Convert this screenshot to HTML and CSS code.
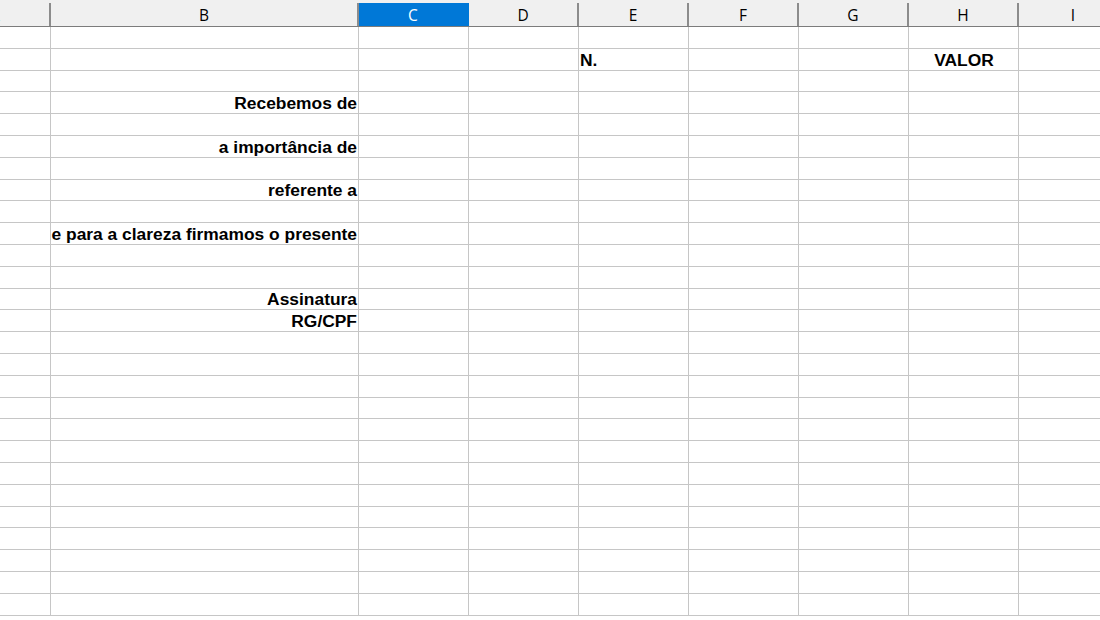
FILE: index.html
```html
<!DOCTYPE html>
<html lang="pt-BR">
<head>
    <meta charset="UTF-8">
    <title>Recibo</title>
    <link rel="stylesheet" href="styles.css">
</head>
<body>

    <div class="sheet">
        <!-- column letters, C is the current column -->
        <div class="col-heads">
            <div class="col-head">A</div>
            <div class="col-head">B</div>
            <div class="col-head selected">C</div>
            <div class="col-head">D</div>
            <div class="col-head">E</div>
            <div class="col-head">F</div>
            <div class="col-head">G</div>
            <div class="col-head">H</div>
            <div class="col-head">I</div>
        </div>

        <div class="row"><span></span><span></span><span></span><span></span><span></span><span></span><span></span><span></span><span></span></div>
        <div class="row"><span></span><span></span><span></span><span></span><span class="bold">N.</span><span></span><span></span><span class="bold center">VALOR</span><span></span></div>
        <div class="row"><span></span><span></span><span></span><span></span><span></span><span></span><span></span><span></span><span></span></div>
        <div class="row"><span></span><span class="bold right">Recebemos de</span><span></span><span></span><span></span><span></span><span></span><span></span><span></span></div>
        <div class="row"><span></span><span></span><span></span><span></span><span></span><span></span><span></span><span></span><span></span></div>
        <div class="row"><span></span><span class="bold right">a importância de</span><span></span><span></span><span></span><span></span><span></span><span></span><span></span></div>
        <div class="row"><span></span><span></span><span></span><span></span><span></span><span></span><span></span><span></span><span></span></div>
        <div class="row"><span></span><span class="bold right">referente a</span><span></span><span></span><span></span><span></span><span></span><span></span><span></span></div>
        <div class="row"><span></span><span></span><span></span><span></span><span></span><span></span><span></span><span></span><span></span></div>
        <div class="row"><span></span><span class="bold right">e para a clareza firmamos o presente</span><span></span><span></span><span></span><span></span><span></span><span></span><span></span></div>
        <div class="row"><span></span><span></span><span></span><span></span><span></span><span></span><span></span><span></span><span></span></div>
        <div class="row"><span></span><span></span><span></span><span></span><span></span><span></span><span></span><span></span><span></span></div>
        <div class="row"><span></span><span class="bold right">Assinatura</span><span></span><span></span><span></span><span></span><span></span><span></span><span></span></div>
        <div class="row"><span></span><span class="bold right">RG/CPF</span><span></span><span></span><span></span><span></span><span></span><span></span><span></span></div>
        <div class="row"><span></span><span></span><span></span><span></span><span></span><span></span><span></span><span></span><span></span></div>
        <div class="row"><span></span><span></span><span></span><span></span><span></span><span></span><span></span><span></span><span></span></div>
        <div class="row"><span></span><span></span><span></span><span></span><span></span><span></span><span></span><span></span><span></span></div>
        <div class="row"><span></span><span></span><span></span><span></span><span></span><span></span><span></span><span></span><span></span></div>
        <div class="row"><span></span><span></span><span></span><span></span><span></span><span></span><span></span><span></span><span></span></div>
        <div class="row"><span></span><span></span><span></span><span></span><span></span><span></span><span></span><span></span><span></span></div>
        <div class="row"><span></span><span></span><span></span><span></span><span></span><span></span><span></span><span></span><span></span></div>
        <div class="row"><span></span><span></span><span></span><span></span><span></span><span></span><span></span><span></span><span></span></div>
        <div class="row"><span></span><span></span><span></span><span></span><span></span><span></span><span></span><span></span><span></span></div>
        <div class="row"><span></span><span></span><span></span><span></span><span></span><span></span><span></span><span></span><span></span></div>
        <div class="row"><span></span><span></span><span></span><span></span><span></span><span></span><span></span><span></span><span></span></div>
        <div class="row"><span></span><span></span><span></span><span></span><span></span><span></span><span></span><span></span><span></span></div>
        <div class="row"><span></span><span></span><span></span><span></span><span></span><span></span><span></span><span></span><span></span></div>
    </div>

</body>
</html>
```

FILE: styles.css
```css
* {
    box-sizing: border-box;
}

body {
    margin: 0;
    overflow: hidden;
    background-color: #fff;
    font-family: "Liberation Sans", Arial, sans-serif;
}

/* column A is scrolled mostly out of view */
.sheet {
    margin-left: -59px;
    width: 1200px;
}

.col-heads,
.row {
    display: grid;
    grid-template-columns: 110px 308px repeat(7, 110px);
}

.col-heads {
    height: 27px;
    background-color: #f0f0f0;
    border-bottom: 1px solid #7c7c7c;
}

.col-head {
    margin-top: 3px;
    display: flex;
    align-items: center;
    justify-content: center;
    border-right: 2px solid #8c8c8c;
    font-family: "Open Sans", "Noto Sans", sans-serif;
    font-size: 15.5px;
    color: #000;
}

.col-head.selected {
    background-color: #0078d7;
    color: #fff;
    border-right-color: #0078d7;
}

.row {
    height: 21.8px;
}

.row span {
    display: flex;
    align-items: flex-end;
    border-right: 1px solid #c6c6c6;
    border-bottom: 1px solid #c6c6c6;
    font-size: 17.4px;
    line-height: 17px;
    padding-bottom: 1px;
    padding-left: 1px;
    color: #000;
    white-space: nowrap;
}

.row span.bold {
    font-weight: bold;
}

.row span.right {
    justify-content: flex-end;
    padding-left: 0;
    padding-right: 1px;
}

.row span.center {
    justify-content: center;
}
```
